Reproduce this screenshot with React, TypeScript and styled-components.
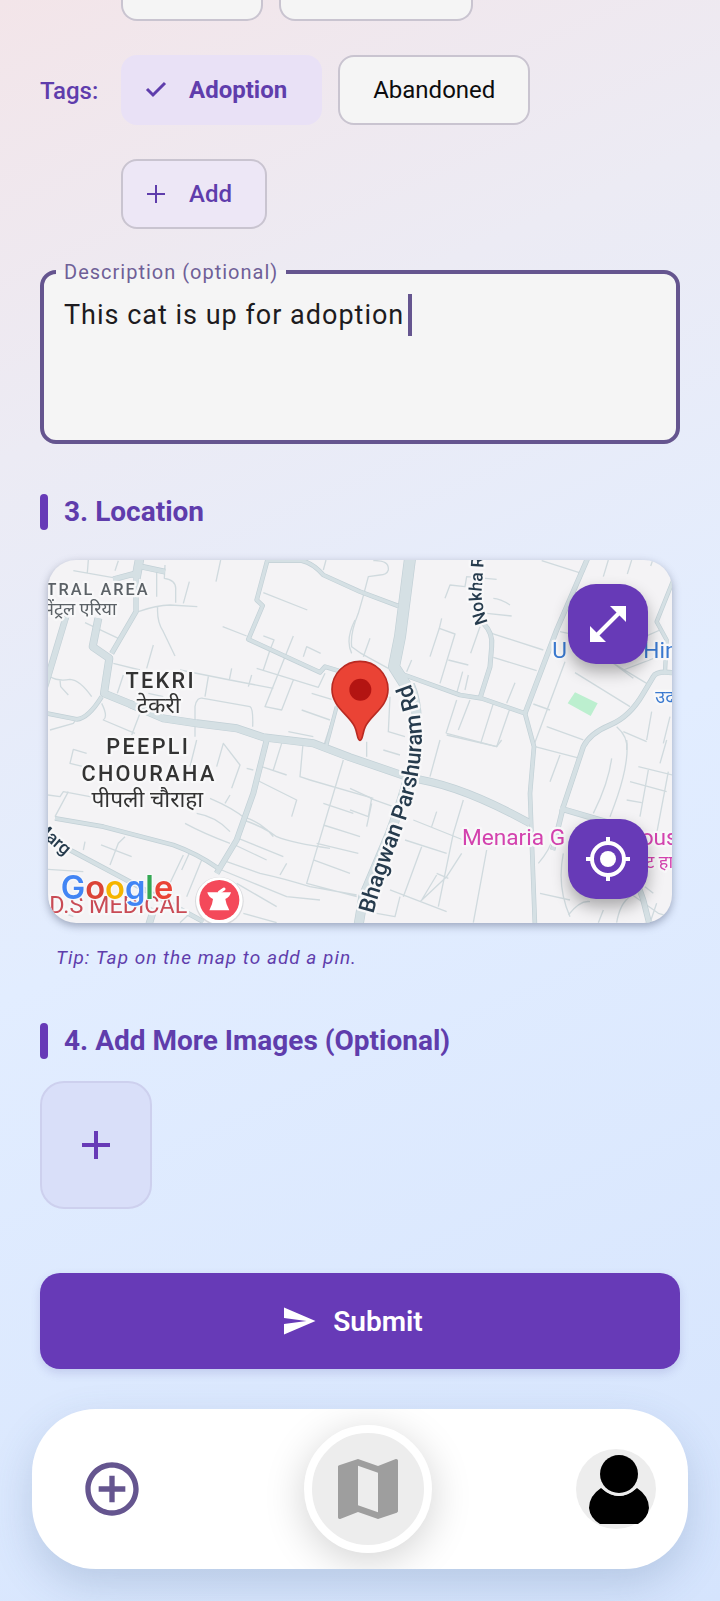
import React, { useState } from "react";
import styled, { createGlobalStyle, css } from "styled-components";
import { MdAddCircleOutline, MdMap, MdSend } from "react-icons/md";

const purple = "#673ab7";
const outline = "#65558f";

const GlobalStyle = createGlobalStyle`
  *, *::before, *::after { box-sizing: border-box; }
  body { margin: 0; font-family: Roboto, "Noto Sans", sans-serif; }
  button, textarea { font: inherit; color: inherit; margin: 0; }
  button { cursor: pointer; }
`;

const Page = styled.div`
  min-height: 100vh;
  overflow: hidden;
  background: linear-gradient(156deg, #f3e5e9 0%, #ecebf4 24%, #e2edff 52%, #d5e4fd 100%);
`;

const Form = styled.form`
  display: flex;
  flex-direction: column;
  padding: 0 40px;
`;

const Field = styled.div`
  display: grid;
  grid-template-columns: 81px 1fr;
  margin-bottom: 34px;
`;

const FieldLabel = styled.span`
  font-size: 24px;
  line-height: 72px;
  font-weight: 500;
  color: #5f3dac;
`;

const Chips = styled.div`
  grid-column: 2;
  display: flex;
  flex-wrap: wrap;
  gap: 34px 16px;
`;

const Chip = styled.button<{ $kind?: "selected" | "add" }>`
  display: flex;
  align-items: center;
  gap: 16px;
  height: 70px;
  padding: 0 33px;
  border: 2px solid #c9c4d0;
  border-radius: 16px;
  background: #f5f5f5;
  color: #0c0c0e;
  font-size: 24px;
  line-height: 32px;
  ${(p) =>
    p.$kind &&
    css`
      padding-left: 16px;
      font-weight: 500;
      color: #5f3dac;
      background: #ede7f6;
    `}
  ${(p) =>
    p.$kind === "selected" &&
    css`
      font-weight: 700;
      background: #e9e1f6;
      border-color: #e9e1f6;
    `}
`;

const ScrolledChip = styled.button<{ $width: number }>`
  width: ${(p) => p.$width}px;
  height: 21px;
  padding: 0;
  border: 2px solid #c9c4d0;
  border-top: 0;
  border-radius: 0 0 16px 16px;
  background: #f5f5f5;
`;

const Outlined = styled.fieldset`
  position: relative;
  min-width: 0;
  height: 184px;
  margin: -3px 0 0;
  padding: 0 0 0 12px;
  border: 4px solid ${outline};
  border-radius: 16px;
  background: #f5f5f5;
`;

const Legend = styled.legend`
  padding: 0 8px;
  font-size: 20px;
  line-height: 24px;
  letter-spacing: 1px;
  color: #6f6097;
`;

const Description = styled.textarea`
  display: block;
  width: 100%;
  height: 144px;
  padding: 10px 8px;
  border: 0;
  outline: 0;
  resize: none;
  background: transparent;
  color: #1d1b20;
  caret-color: transparent;
  font-size: 27px;
  line-height: 42px;
  letter-spacing: 1px;
`;

const Caret = styled.span`
  position: absolute;
  left: 364px;
  top: 10px;
  width: 4px;
  height: 42px;
  background: ${outline};
`;

const SectionTitle = styled.h2`
  display: flex;
  align-items: center;
  gap: 16px;
  margin: 50px 0 0;
  font-size: 28px;
  line-height: 36px;
  font-weight: 700;
  color: #5f3dac;
  &::before {
    content: "";
    width: 8px;
    height: 36px;
    border-radius: 4px;
    background: ${purple};
  }
`;

const MapCard = styled.div`
  position: relative;
  height: 363px;
  margin: 30px 8px 0;
  border-radius: 28px;
  overflow: hidden;
  background: #f4f3f5;
`;

const MapShadow = styled.div`
  filter: drop-shadow(0 3px 4px rgba(50, 60, 90, 0.4));
`;

const MapDrawing = styled.svg`
  display: block;
  width: 100%;
  height: 100%;
`;

const MapButton = styled.button<{ $edge: "top" | "bottom" }>`
  position: absolute;
  right: 24px;
  ${(p) => p.$edge}: 24px;
  width: 80px;
  height: 80px;
  padding: 0;
  border: 0;
  border-radius: 28px;
  display: grid;
  place-items: center;
  background: ${purple};
  color: #fff;
  box-shadow: 0 8px 16px rgba(0, 0, 0, 0.3);
`;

const Tip = styled.p`
  margin: 20px 16px 0;
  font-size: 19px;
  line-height: 30px;
  font-style: italic;
  letter-spacing: 1px;
  color: #5f3dac;
`;

const AddImage = styled.button`
  display: grid;
  place-items: center;
  width: 112px;
  height: 128px;
  margin-top: 22px;
  border: 2px solid #cdd0ee;
  border-radius: 24px;
  background: #d9dff9;
  color: ${purple};
`;

const Submit = styled.button`
  display: flex;
  align-items: center;
  justify-content: center;
  gap: 16px;
  height: 96px;
  margin-top: 64px;
  padding: 0 48px 0 32px;
  border: 0;
  border-radius: 20px;
  background: ${purple};
  color: #fff;
  font-size: 28px;
  font-weight: 600;
  box-shadow: 0 4px 10px rgba(80, 70, 160, 0.18);
`;

const Nav = styled.nav`
  display: flex;
  align-items: center;
  justify-content: space-between;
  height: 160px;
  margin: 40px 32px 32px;
  padding: 0 32px;
  border-radius: 64px;
  background: #fff;
  box-shadow: 0 16px 40px rgba(70, 100, 140, 0.22);
`;

const NavButton = styled.button<{ $size: number; $raised?: boolean }>`
  display: grid;
  place-items: center;
  flex: none;
  width: ${(p) => p.$size}px;
  height: ${(p) => p.$size}px;
  padding: 0;
  border: 0;
  border-radius: 50%;
  background: none;
  color: ${outline};
  ${(p) =>
    p.$raised &&
    css`
      border: 8px solid #fff;
      background: #ededed;
      color: #9e9e9e;
      box-shadow: 0 8px 40px rgba(0, 0, 0, 0.18);
      clip-path: inset(-16px -60px);
    `}
`;

const mainRoads: [number, string][] = [
  [28, "M330 20 318 85"],
  [16, "M318 80V185L245 310"],
  [18, "M250 88 325 68M335 50 405 65"],
  [24, "M205 205 188 290 238 325 222 430 320 470"],
  [24, "M300 462 400 505 500 520 620 535 700 562 850 580 960 622 1130 680 1175 690Q1310 715 1500 820"],
  [14, "M40 488 140 508Q175 505 215 440"],
  [20, "M108 200 45 410"],
  [14, "M715 20 680 150 698 167 655 268 870 367 885 350 925 362"],
  [14, "M715 32H815Q850 40 880 75L990 125 1105 168"],
  [36, "M1142 10 1110 260 1092 350 1130 410"],
  [30, "M1140 405C1190 520 1140 690 1080 850L1000 1040 985 1130"],
  [14, "M1110 370 1290 435 1355 445 1485 490 1512 590 1500 730 1515 1130"],
  [15, "M1360 220Q1390 250 1385 290L1380 350 1350 445"],
  [16, "M1675 20 1580 240 1485 490"],
  [16, "M1940 370Q1880 360 1870 380L1840 430Q1800 500 1740 525 1680 550 1660 590L1600 770 1568 900"],
  [18, "M1590 775 1760 825 1840 1050 1860 1130"],
  [13, "M1930 90 1880 215 1910 270 1905 365"],
  [18, "M710 570 670 730 620 870 560 970"],
  [14, "M75 805 220 830 430 885Q500 910 565 955"],
  [15, "M120 900 280 985 520 1115"],
  [12, "M920 470 888 590"],
  [22, "M372 1075 355 1130"],
];

const minorStreets = [
  "M130 62 245 82 260 85M175 30 172 68M265 32 255 62M380 62V140M405 45 403 85Q440 90 437 120V158M478 95 460 160M325 185Q380 165 420 165L502 170M383 170Q380 215 400 245L435 318M165 218 265 265M370 285 350 355M572 30 558 95M700 128 832 180M578 230 650 258M888 30 880 60M975 210Q945 270 965 310",
  "M700 258 732 270 720 300M790 258 765 320 705 470 755 480 790 390M720 300 700 360M820 320 830 290 872 310M680 355 865 412 885 370M845 430 905 448M815 480 900 510M775 545 850 560M930 440 880 590",
  "M250 340 330 360M280 375 262 430M450 360 600 390 730 415M535 380 525 440M605 355 598 390M665 375 655 410M495 560 495 470Q500 440 520 445L660 470Q670 475 668 530M330 490 305 555M355 430 400 440M215 460Q235 500 220 510L315 550M60 380Q85 395 120 388 150 390 185 440M90 390 92 410 115 435M60 540 130 520 140 505",
  "M170 610 130 598 120 640 160 650M54 735 90 740 100 725 180 740 260 745M115 725 75 800M165 875 160 900M213 885 305 920M285 860 265 880 240 945M130 900 150 910M54 958 160 965M460 915 410 1020M480 905 455 960M515 930 470 1040M350 1000 370 1010",
  "M500 570 480 650M560 650 580 580 630 645 605 715M650 655 670 660M600 735 585 760M540 745Q610 775 645 805M500 790Q560 800 600 845M465 820Q520 850 600 880M640 800Q700 820 730 860M755 580 730 660M695 650 770 675M680 690 800 750 785 800M820 570 810 680 840 690M640 810Q700 830 740 860 790 880 900 895M625 865 760 920M615 885 710 930M770 940 750 975",
  "M940 630 830 1000 980 1040M840 690 1030 745M880 760 970 790M880 825 960 850M860 880 985 910M850 930 960 970M590 935 690 970Q760 985 840 1010L980 1035M575 960 770 1040 870 1050M620 1000 740 1070M480 1090 450 1118M590 990 580 1110M640 1090 740 1118M54 1070 130 1100",
];

const eastStreets = [
  "M70 32Q118 30 115 60 110 75 90 75L55 80Q40 140 25 190 0 250 5 290 30 310 60 325L115 355M60 265 40 320M185 330 170 365M440 88 350 80 345 110 300 105 285 145M430 145Q450 145 480 165M410 190 485 198M575 32 695 70M775 30 760 80M845 30 832 72M912 20 902 48",
  "M275 205 268 235 315 252 270 400M268 235 240 320M390 230 362 310M295 330 355 345M425 250 580 300M430 322 560 362M338 365 320 430M355 375 345 420M495 398 470 460M320 450 288 550M360 450 325 540M430 460 392 580M480 475 440 590 290 550M120 440 115 545 165 560M630 245 700 260M645 335 550 590M550 462 600 480",
  "M690 280 890 400M675 368 840 470M790 340 850 385M820 360 950 310M905 485 890 570M960 500 940 580M590 530 700 570M800 530Q835 560 830 600M820 545 890 575M885 260 930 240",
  "M100 600 150 615M50 575 50 620M270 570 240 680M290 555 440 590 455 570M0 715 65 745 55 800 0 780M60 745 130 770M65 760 50 830M0 850 30 860M340 750 310 850 265 1070M190 810 340 870M165 870 290 910M215 890 160 1040M260 785 245 830M335 910 290 980 210 1055M260 970 295 985M260 975 215 1050M120 1020 290 1085M150 1040 135 1100 80 1090M410 900 370 1118M555 590 690 625M630 615 600 695M785 625Q775 700 730 790M830 570Q840 650 780 800",
  "M865 650 967 675M840 695 950 725M830 750 875 758M895 660 870 800M955 665 920 850M570 1030 660 1050M640 910Q620 1010 660 1100M655 1095Q690 1050 720 1055M760 1080 745 1118M840 1040Q810 1060 800 1118M840 1030 925 1090 960 1100M920 1060 900 1118M565 940Q600 900 610 860M885 1010 910 1030M950 570 930 640",
];

function StreetMap() {
  return (
    <MapDrawing viewBox="0 0 624 363" preserveAspectRatio="xMidYMid slice" role="img">
      <g transform="translate(-18 -10) scale(0.33333)" fill="none" strokeLinejoin="round">
        <g stroke="#d0dade" strokeWidth="4">
          {minorStreets.map((d) => (
            <path key={d} d={d} />
          ))}
          <g transform="translate(960 0)">
            {eastStreets.map((d) => (
              <path key={d} d={d} />
            ))}
          </g>
        </g>
        {mainRoads.map(([w, d]) => (
          <path key={d} d={d} stroke="#c2d0d6" strokeWidth={w} />
        ))}
        {mainRoads.map(([w, d]) => (
          <path key={d} d={d} stroke="#d5e0e4" strokeWidth={w - 4} />
        ))}
        <path d="M1635 427 1703 460 1682 498 1613 460Z" fill="#bcefcf" />

        <defs>
          <path id="nokha" d="M1374 218Q1350 155 1356 105L1366 -40" />
          <path id="bhagwan" d="M1030 1092C1073 930 1128 830 1154 720 1184 590 1184 510 1143 405" />
        </defs>

        <g
          stroke="#f8f8f9"
          strokeWidth="14"
          paintOrder="stroke"
          fontFamily='Roboto, "Noto Sans", "Noto Sans Devanagari", sans-serif'
        >
          <g fill="#5b6166">
            <text x="359" y="135" fontSize="49" fontWeight="500" letterSpacing="6" textAnchor="end">TRAL AREA</text>
            <text x="260" y="195" fontSize="54" textAnchor="end">सेंट्रल एरिया</text>
          </g>
          <g fill="#333" textAnchor="middle" fontWeight="500">
            <text x="392" y="413" fontSize="65" letterSpacing="7">TEKRI</text>
            <text x="386" y="490" fontSize="68" fontWeight="400">टेकरी</text>
            <text x="355" y="613" fontSize="65" letterSpacing="7">PEEPLI</text>
            <text x="357" y="692" fontSize="65" letterSpacing="7">CHOURAHA</text>
            <text x="352" y="770" fontSize="68" fontWeight="400">पीपली चौराहा</text>
          </g>
          <g fill="#263b4d" fontWeight="500">
            <text transform="translate(104 918) rotate(41)" fontSize="54" textAnchor="end">Marg</text>
            <text fontSize="53"><textPath href="#nokha">Nokha R</textPath></text>
            <text fontSize="67"><textPath href="#bhagwan">Bhagwan Parshuram Rd</textPath></text>
          </g>
          <g fill="#3a79d0" fontSize="68">
            <text x="1567" y="323">U</text>
            <text x="1840" y="323">Hin</text>
            <text x="1876" y="460" fontSize="54">उदय</text>
          </g>
          <g fill="#d342ae" fontSize="68">
            <text x="1296" y="886">Menaria G</text>
            <text x="1832" y="886">ous</text>
            <text x="1846" y="955" fontSize="54">ट हाउ</text>
          </g>
          <text x="472" y="1088" fontSize="70" textAnchor="end" fill="#c94b55">D.S MEDICAL</text>
          <text x="92" y="1046" fontSize="98" fontFamily="Inter, Roboto, sans-serif" fontWeight="600" strokeWidth="8">
            <tspan fill="#4285f4">G</tspan>
            <tspan fill="#db4437">o</tspan>
            <tspan fill="#f4b400">o</tspan>
            <tspan fill="#4285f4">g</tspan>
            <tspan fill="#34a853">l</tspan>
            <tspan fill="#ea4335">e</tspan>
          </text>
        </g>

        <circle cx="568" cy="1054" r="73" fill="#d9dadd" />
        <circle cx="568" cy="1052" r="70" fill="#fff" />
        <circle cx="568" cy="1050" r="60" fill="#f4495a" />
        <path fill="#fff" d="M532 1027H603Q600 1041 586 1047 588 1063 598 1081H538Q548 1063 549 1047 535 1041 532 1027Z" />
        <path stroke="#fff" strokeWidth="9" strokeLinecap="round" d="M568 1027 582 1017" />

        <path
          d="M990 571C981 571 983 548 974 530 958 494 906 472 906 418A84 84 0 0 1 1074 418C1074 472 1022 494 1006 530 997 548 999 571 990 571Z"
          fill="#ea4335"
          stroke="#b92a22"
          strokeWidth="5"
        />
        <circle cx="991" cy="419" r="33" fill="#b31412" />
      </g>
    </MapDrawing>
  );
}

const CheckIcon = () => (
  <svg width="34" height="34" viewBox="0 0 34 34" fill="none" stroke="currentColor" strokeWidth="3">
    <path d="M8 16 14 22 26 10" />
  </svg>
);

const PlusIcon = ({ size, arm, stroke }: { size: number; arm: number; stroke: number }) => (
  <svg width={size} height={size} viewBox={`${-size / 2} ${-size / 2} ${size} ${size}`} stroke="currentColor" strokeWidth={stroke}>
    <path d={`M${-arm} 0H${arm}M0 ${-arm}V${arm}`} />
  </svg>
);

const ExpandIcon = () => (
  <svg width="40" height="40" viewBox="0 0 40 40" fill="#fff">
    <path d="M22 2H38V18ZM2 22V38H18Z" />
    <path d="M33 7 7 33" stroke="#fff" strokeWidth="4" />
  </svg>
);

const LocateIcon = () => (
  <svg width="44" height="44" viewBox="0 0 44 44" fill="none" stroke="#fff" strokeWidth="4">
    <circle cx="22" cy="22" r="16" />
    <circle cx="22" cy="22" r="8" fill="#fff" stroke="none" />
    <path d="M22 0V6M22 38V44M0 22H6M38 22H44" />
  </svg>
);

const Avatar = () => (
  <svg width="80" height="80" viewBox="0 0 80 80">
    <circle cx="40" cy="40" r="40" fill="#ededed" />
    <path d="M25 39Q43 55 61 39Q73 47 73 59 72 69 62 75H24Q14 69 13 59 13 47 25 39Z" />
    <circle cx="43" cy="25" r="22" fill="#ededed" />
    <circle cx="43" cy="25" r="19" />
  </svg>
);

export default function App() {
  const [description, setDescription] = useState("This cat is up for adoption");
  return (
    <Page>
      <GlobalStyle />
      <Form onSubmit={(e) => e.preventDefault()}>
        <Field>
          <Chips>
            <ScrolledChip type="button" $width={142} />
            <ScrolledChip type="button" $width={194} />
          </Chips>
        </Field>
        <Field>
          <FieldLabel>Tags:</FieldLabel>
          <Chips>
            <Chip type="button" $kind="selected" aria-pressed="true">
              <CheckIcon />
              Adoption
            </Chip>
            <Chip type="button" aria-pressed="false">Abandoned</Chip>
            <Chip type="button" $kind="add">
              <PlusIcon size={34} arm={9} stroke={2} />
              Add
            </Chip>
          </Chips>
        </Field>

        <Outlined>
          <Legend>
            <label htmlFor="description">Description (optional)</label>
          </Legend>
          <Description id="description" value={description} onChange={(e) => setDescription(e.target.value)} />
          <Caret />
        </Outlined>

        <SectionTitle>3. Location</SectionTitle>
        <MapShadow>
          <MapCard>
            <StreetMap />
            <MapButton type="button" $edge="top">
              <ExpandIcon />
            </MapButton>
            <MapButton type="button" $edge="bottom">
              <LocateIcon />
            </MapButton>
          </MapCard>
        </MapShadow>
        <Tip>Tip: Tap on the map to add a pin.</Tip>

        <SectionTitle>4. Add More Images (Optional)</SectionTitle>
        <AddImage type="button">
          <PlusIcon size={36} arm={14} stroke={4} />
        </AddImage>

        <Submit type="submit">
          <MdSend size={36} />
          Submit
        </Submit>
      </Form>

      <Nav>
        <NavButton type="button" $size={96}>
          <MdAddCircleOutline size={64} />
        </NavButton>
        <NavButton type="button" $size={128} $raised>
          <MdMap size={80} />
        </NavButton>
        <NavButton type="button" $size={80}>
          <Avatar />
        </NavButton>
      </Nav>
    </Page>
  );
}
